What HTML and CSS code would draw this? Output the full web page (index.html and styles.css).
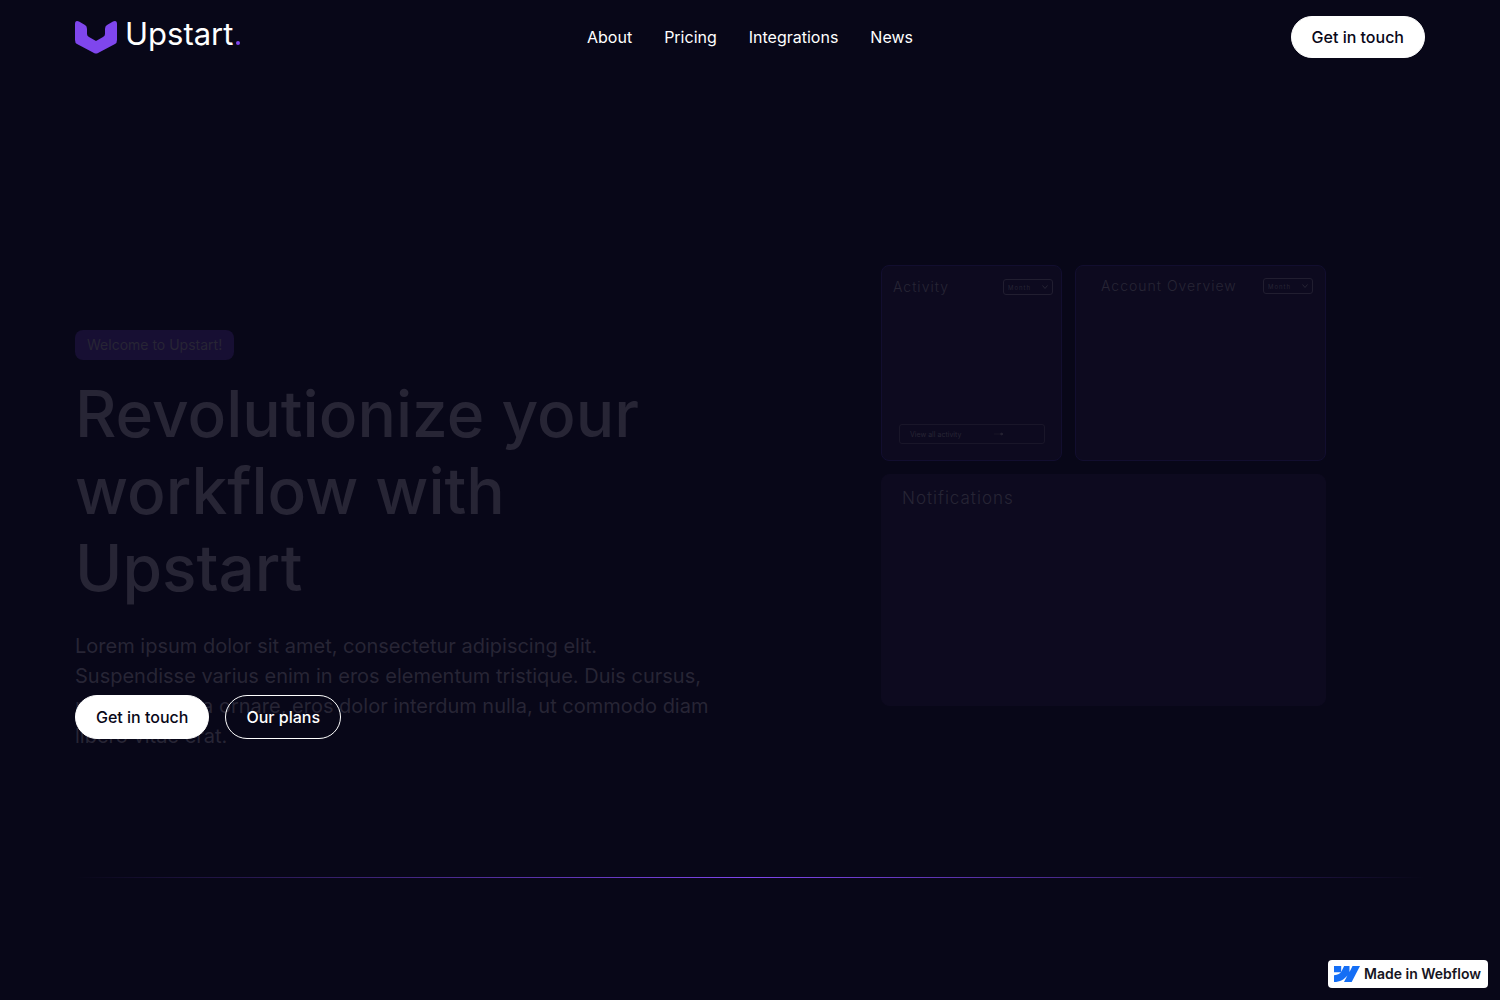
FILE: index.html
```html
<!DOCTYPE html>
<html lang="en">
<head>
<meta charset="utf-8">
<meta name="viewport" content="width=device-width, initial-scale=1">
<title>Upstart</title>
<link rel="stylesheet" href="styles.css">
</head>
<body>
<header class="navbar">
  <a class="logo" href="#">
    <svg class="logo-mark" viewBox="0 0 42 33" aria-hidden="true"><path d="M0 3Q0-1 4 .5L10 4Q12 5 12 8V13Q12 15 14 16L21 20L28 16Q30 15 30 13V8Q30 5 32 4L38 .5Q42-1 42 3V19Q42 22 40 23L23 32Q21 33 19 32L2 23Q0 22 0 19Z" fill="#7f46ed"/></svg>
    <span class="logo-name">Upstart<svg class="logo-dot" viewBox="0 0 4 4" aria-hidden="true"><circle cx="2" cy="2" r="2" fill="#7f46ed"/></svg></span>
  </a>
  <nav class="nav-links">
    <a href="#">About</a>
    <a href="#">Pricing</a>
    <a href="#">Integrations</a>
    <a href="#">News</a>
  </nav>
  <div class="nav-action"><button class="button" type="button">Get in touch</button></div>
</header>
<main>
  <section class="hero">
    <div class="hero-copy">
      <div class="tag">Welcome to Upstart!</div>
      <h1>Revolutionize your workflow with Upstart</h1>
      <p>Lorem ipsum dolor sit amet, consectetur adipiscing elit. Suspendisse varius enim in eros elementum tristique. Duis cursus, mi quis viverra ornare, eros dolor interdum nulla, ut commodo diam libero vitae erat.</p>
      <div class="actions">
        <button class="button" type="button">Get in touch</button>
        <button class="button outline" type="button">Our plans</button>
      </div>
    </div>
    <div class="dashboard">
      <article class="panel activity">
        <div class="panel-head">
          <h2>Activity</h2>
          <button class="period" type="button">Month<svg viewBox="0 0 6 4" aria-hidden="true"><path d="M.5.5L3 3.5L5.500.5"/></svg></button>
        </div>
        <button class="view-all" type="button"><span>View all activity</span><svg viewBox="0 0 10 4" aria-hidden="true"><path d="M7 1L9 2L7 3Z"/><path class="shaft" d="M0 2H8"/></svg></button>
      </article>
      <article class="panel overview">
        <div class="panel-head">
          <h2>Account Overview</h2>
          <button class="period" type="button">Month<svg viewBox="0 0 6 4" aria-hidden="true"><path d="M.5.5L3 3.5L5.500.5"/></svg></button>
        </div>
      </article>
      <article class="panel notifications"><h2>Notifications</h2></article>
    </div>
  </section>
  <hr class="divider">
</main>
<a class="webflow-badge" href="#">
  <svg viewBox="0 0 26 16" aria-hidden="true"><path d="M26 0L17.700 16H10L13.400 9.400C10.600 13 6 16 0 16V9.300C4 9 6.400 6.800 7 6.200H0V0H7.200V6L10.100 0H15.500V6L18.500 0Z" fill="#146ef5"/></svg>
  <span>Made in Webflow</span>
</a>
</body>
</html>
```
FILE: styles.css
```css
* { box-sizing: border-box; }
body {
  margin: 0;
  min-height: 100vh;
  background: #080718;
  color: #fff;
  font-family: Inter, "Liberation Sans", sans-serif;
}
a { color: inherit; text-decoration: none; }
h1, h2, p { margin: 0; }
button { font: inherit; color: inherit; }

.navbar {
  display: grid;
  grid-template-columns: 1fr auto 1fr;
  align-items: center;
  padding: 16px 5%;
}
.logo {
  display: flex;
  align-items: center;
  gap: 8px;
  font-size: 31px;
  line-height: 36px;
}
.logo-mark { width: 42px; height: 33px; }
.logo-name { padding-bottom: 6px; }
.logo-dot { width: 4px; height: 4px; margin-left: 3px; }
.nav-links { display: flex; gap: 32px; font-size: 16px; line-height: 24px; }
.nav-action { display: flex; justify-content: flex-end; }

.button {
  padding: 8px 20px;
  border: 1px solid #fff;
  border-radius: 24px;
  background: #fff;
  color: #080718;
  font-size: 16px;
  font-weight: 500;
  line-height: 24px;
}
.button.outline { background: transparent; color: #fff; }

.hero {
  display: grid;
  grid-template-columns: 1fr 1fr;
  gap: 64px;
  align-items: center;
  padding: 191px 5% 73px;
}
.hero h1, .hero p, .tag, .panel { color: #272535; }
.tag {
  width: fit-content;
  padding: 4px 12px;
  border-radius: 8px;
  background: #170f33;
  font-size: 14px;
  line-height: 22px;
}
.hero h1 {
  margin: 16px 0 24px;
  font-size: 64px;
  font-weight: 500;
  line-height: 1.2;
}
.hero p { font-size: 20px; line-height: 30px; }
.actions {
  position: relative;
  display: flex;
  gap: 16px;
  margin-top: -56px;
}
.actions .button { padding: 9px 20px; }

.dashboard {
  display: grid;
  grid-template-columns: 181fr 251fr;
  grid-template-rows: 196px 232px;
  gap: 13px;
  width: 100%;
  max-width: 445px;
  margin: 0 auto 98px;
}
.panel {
  border: 1px solid #120e2f;
  border-radius: 8px;
  background: #0d0a1f;
  letter-spacing: 1px;
}
.panel h2 { font-size: 14px; font-weight: 300; line-height: 18px; }
.panel-head { display: flex; align-items: center; justify-content: space-between; }
.activity {
  display: flex;
  flex-direction: column;
  justify-content: space-between;
  padding: 12px 8px 16px 11px;
}
.overview { padding: 11px 12px 12px 25px; }
.notifications { grid-column: 1 / -1; padding: 11px 20px; border-color: #0d0a1f; }
.panel.notifications h2 { font-size: 17px; line-height: 24px; }
.period {
  display: flex;
  align-items: center;
  justify-content: space-between;
  width: 50px;
  height: 16px;
  padding: 0 4px;
  border: 1px solid #211e30;
  border-radius: 3px;
  background: transparent;
  font-size: 6px;
  letter-spacing: 1px;
}
.period svg { width: 6px; height: 4px; }
.panel svg { fill: none; stroke: currentColor; stroke-width: 1; }
.panel .shaft { opacity: .4; }
.view-all {
  display: flex;
  align-items: center;
  gap: 33px;
  height: 20px;
  margin: 0 8px 0 6px;
  padding: 0 10px;
  border: 1px solid #191629;
  border-radius: 3px;
  background: transparent;
  font-size: 7px;
}
.view-all svg { width: 10px; height: 4px; }

.divider {
  height: 1px;
  margin: 0 5% 122px;
  border: 0;
  background: linear-gradient(90deg, transparent, #7f46ed, transparent);
}
.webflow-badge {
  position: fixed;
  right: 12px;
  bottom: 12px;
  display: flex;
  align-items: center;
  gap: 4px;
  padding: 4px 7px 4px 6px;
  border-radius: 4px;
  background: #fff;
  color: #16151e;
  font-size: 14px;
  font-weight: 600;
  line-height: 20px;
}
.webflow-badge svg { width: 26px; height: 16px; }
```
